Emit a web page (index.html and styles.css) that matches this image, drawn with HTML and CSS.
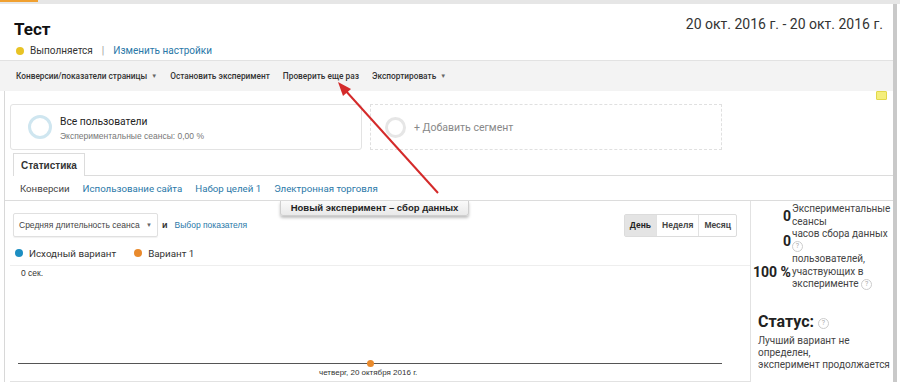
FILE: index.html
```html
<!DOCTYPE html>
<html lang="ru">
<head>
<meta charset="utf-8">
<link rel="stylesheet" href="styles.css">
</head>
<body>
<div class="topbar"><span class="topbar-accent"></span></div>
<div class="frame">
  <div class="main">
    <header class="header">
      <div class="head-left">
        <h1 class="title">Тест</h1>
        <div class="status-row">
          <span class="dot dot-yellow"></span>
          <span class="status-text">Выполняется</span>
          <span class="sep">|</span>
          <a class="link">Изменить настройки</a>
        </div>
      </div>
      <div class="date">20 окт. 2016 г. - 20 окт. 2016 г.</div>
    </header>
    <nav class="toolbar">
      <span class="tb-item">Конверсии/показатели страницы <span class="caret">▼</span></span>
      <span class="tb-item">Остановить эксперимент</span>
      <span class="tb-item">Проверить еще раз</span>
      <span class="tb-item">Экспортировать <span class="caret">▼</span></span>
    </nav>
    <div class="content">
      <span class="note"></span>
      <div class="segments">
        <div class="seg seg-active">
          <span class="ring ring-blue"></span>
          <div class="seg-text">
            <div class="seg-name">Все пользователи</div>
            <div class="seg-sub">Экспериментальные сеансы: 0,00 %</div>
          </div>
        </div>
        <div class="seg seg-add">
          <span class="ring ring-gray"></span>
          <span class="seg-add-text">+ Добавить сегмент</span>
        </div>
      </div>
      <div class="tabs">
        <span class="tab">Статистика</span>
        <span class="tabs-line"></span>
      </div>
      <div class="subtabs">
        <span class="subtab current">Конверсии</span>
        <a class="subtab link">Использование сайта</a>
        <a class="subtab link">Набор целей 1</a>
        <a class="subtab link">Электронная торговля</a>
      </div>
      <div class="body">
        <div class="chart-col">
          <div class="controls">
            <div class="select">Средняя длительность сеанса <span class="caret">▼</span></div>
            <span class="and">и</span>
            <a class="link small-link">Выбор показателя</a>
            <div class="period">
              <span class="pbtn active">День</span>
              <span class="pbtn">Неделя</span>
              <span class="pbtn">Месяц</span>
            </div>
          </div>
          <div class="legend">
            <span class="dot dot-blue"></span><span class="leg-label">Исходный вариант</span>
            <span class="dot dot-orange"></span><span class="leg-label">Вариант 1</span>
          </div>
          <div class="chart">
            <div class="y-label">0 сек.</div>
            <div class="plot">
              <div class="axis"><span class="point"></span></div>
            </div>
            <div class="x-label">четверг, 20 октября 2016 г.</div>
          </div>
        </div>
        <aside class="side">
          <table class="stats">
            <tr><td class="num">0</td><td class="lbl">Экспериментальные сеансы</td></tr>
            <tr><td class="num">0</td><td class="lbl">часов сбора данных <span class="q">?</span></td></tr>
            <tr><td class="num">100 %</td><td class="lbl">пользователей, участвующих в эксперименте <span class="q">?</span></td></tr>
          </table>
          <div class="status-title">Статус: <span class="q">?</span></div>
          <div class="status-desc">Лучший вариант не определен,<br>эксперимент продолжается</div>
        </aside>
      </div>
    </div>
  </div>
  <div class="scrollbar"></div>
</div>
<div class="tooltip">Новый эксперимент – сбор данных</div>
<svg class="arrow" width="900" height="382" viewBox="0 0 900 382">
  <line x1="438" y1="193" x2="345" y2="90" stroke="#d42a2a" stroke-width="2"/>
  <polygon points="338,82 351,89 343,96" fill="#d42a2a"/>
</svg>
</body>
</html>
```

FILE: styles.css
```css
* { box-sizing: border-box; }
html, body { margin: 0; padding: 0; }
body {
  width: 900px;
  height: 382px;
  overflow: hidden;
  background: #fff;
  font-family: Roboto, "Liberation Sans", Arial, sans-serif;
  color: #222;
  position: relative;
}
a { cursor: pointer; }
.topbar {
  height: 4px;
  background: #e6e6e6;
  display: flex;
}
.topbar-accent {
  width: 38px;
  height: 2px;
  background: #f0a030;
}
.frame {
  display: flex;
  height: 378px;
}
.main {
  flex: 1;
  display: flex;
  flex-direction: column;
  min-width: 0;
}
.scrollbar {
  width: 7px;
  background: #fff;
  border-left: 4px solid #c9c9c9;
}
.header {
  display: flex;
  justify-content: space-between;
  height: 56px;
  padding: 0 10px 0 14px;
}
.title {
  margin: 15px 0 0;
  font-size: 17px;
  font-weight: 700;
  line-height: 20px;
  color: #111;
}
.status-row {
  display: flex;
  align-items: center;
  margin-top: 5px;
  font-size: 10px;
  line-height: 14px;
  padding-left: 2px;
}
.dot {
  display: inline-block;
  width: 8px;
  height: 8px;
  border-radius: 50%;
}
.dot-yellow { background: #e8c325; margin-right: 6px; }
.status-text { color: #333; }
.sep { color: #999; margin: 0 9px 0 9px; }
.link { color: #2a78a8; text-decoration: none; }
.date {
  margin-top: 10px;
  font-size: 14px;
  color: #333;
  line-height: 20px;
}
.toolbar {
  height: 31px;
  background: #f3f3f3;
  border-top: 1px solid #e2e2e2;
  display: flex;
  align-items: center;
  padding-left: 16px;
  gap: 13px;
  font-family: Roboto, "Liberation Sans", Arial, sans-serif;
  font-size: 8.3px;
  font-weight: 500;
  color: #333;
}
.tb-item { white-space: nowrap; }
.caret { font-size: 6px; color: #666; margin-left: 2px; vertical-align: 1px; }
.content {
  flex: 1;
  border-left: 1px solid #d8d8d8;
  margin-left: 4px;
  position: relative;
  display: flex;
  flex-direction: column;
}
.note {
  position: absolute;
  right: 6px;
  top: 0;
  width: 11px;
  height: 9px;
  background: #f4ee7c;
  border: 1px solid #e2d84a;
  border-radius: 1px;
}
.segments {
  display: flex;
  gap: 8px;
  padding: 13px 0 0 5px;
  height: 59px;
}
.seg {
  width: 352px;
  height: 46px;
  display: flex;
  align-items: center;
}
.seg-active {
  border: 1px solid #e3e3e3;
  border-radius: 3px;
  padding-left: 17px;
}
.seg-add {
  border: 1px dashed #e0e0e0;
  padding-left: 14px;
}
.ring {
  width: 24px;
  height: 24px;
  border-radius: 50%;
  flex: none;
}
.ring-blue { border: 3px solid #cfe6f0; }
.ring-gray { border: 3px solid #e6e6e6; width: 21px; height: 21px; }
.seg-text { margin-left: 8px; margin-top: 2px; }
.seg-name { font-size: 10.3px; color: #222; line-height: 14px; }
.seg-sub { font-size: 8.5px; color: #777; line-height: 12px; margin-top: 1px; font-family: "Liberation Sans", Arial, sans-serif; }
.seg-add-text { font-size: 10.5px; color: #888; margin-left: 8px; }
.tabs {
  display: flex;
  align-items: flex-end;
  height: 26px;
  padding-left: 8px;
}
.tab {
  height: 23px;
  padding: 0 7px;
  border: 1px solid #dcdcdc;
  border-bottom: none;
  font-family: "Liberation Sans", Arial, sans-serif;
  font-size: 10px;
  font-weight: 700;
  color: #333;
  display: flex;
  align-items: center;
  background: #fff;
}
.tabs-line {
  flex: 1;
  border-bottom: 1px solid #dcdcdc;
}
.subtabs {
  height: 25px;
  display: flex;
  align-items: center;
  gap: 13px;
  padding-left: 15px;
  font-size: 9.7px;
  border-bottom: 1px solid #dcdcdc;
}
.subtab.current { color: #444; }
.body {
  flex: 1;
  display: flex;
}
.chart-col {
  width: 746px;
  border-right: 1px solid #e2e2e2;
  display: flex;
  flex-direction: column;
}
.controls {
  display: flex;
  align-items: center;
  height: 40px;
  padding: 8px 13px 0 8px;
}
.select {
  width: 145px;
  height: 24px;
  border: 1px solid #e0e0e0;
  border-radius: 2px;
  font-family: "Liberation Sans", Arial, sans-serif;
  font-size: 8.5px;
  color: #444;
  display: flex;
  align-items: center;
  justify-content: space-between;
  padding: 0 5px 0 5px;
  box-shadow: 0 1px 1px rgba(0,0,0,0.06);
}
.and { font-family: "Liberation Sans", Arial, sans-serif; font-size: 9px; font-weight: 700; margin: 0 7px 0 4px; color: #333; }
.small-link { font-family: "Liberation Sans", Arial, sans-serif; font-size: 8.5px; }
.period {
  margin-left: auto;
  display: flex;
  border: 1px solid #dcdcdc;
  border-radius: 2px;
  height: 23px;
}
.pbtn {
  font-family: "Liberation Sans", Arial, sans-serif;
  font-size: 8.5px;
  font-weight: 700;
  color: #444;
  display: flex;
  align-items: center;
  padding: 0 5px;
  border-left: 1px solid #e2e2e2;
}
.pbtn:first-child { border-left: none; }
.pbtn.active { background: #e4e4e4; color: #222; }
.legend {
  display: flex;
  align-items: center;
  height: 24px;
  padding-left: 10px;
  font-size: 9.8px;
  color: #333;
}
.dot-blue { background: #1c8ec2; }
.dot-orange { background: #e98a2c; margin-left: 18px; }
.leg-label { margin-left: 6px; }
.chart {
  flex: 1;
  margin-left: 5px;
  border-top: 1px solid #eee;
  border-bottom: 1px solid #e2e2e2;
  display: flex;
  flex-direction: column;
  position: relative;
}
.y-label {
  font-family: "Liberation Sans", Arial, sans-serif;
  font-size: 8.5px;
  color: #333;
  padding: 2px 0 0 11px;
}
.plot {
  flex: 1;
  display: flex;
  align-items: flex-end;
  padding: 0 28px 0 8px;
}
.axis {
  flex: 1;
  height: 1px;
  background: #555;
  position: relative;
}
.point {
  position: absolute;
  left: 349px;
  top: -3px;
  width: 7px;
  height: 7px;
  border-radius: 50%;
  background: #e98a2c;
}
.x-label {
  font-family: "Liberation Sans", Arial, sans-serif;
  font-size: 8px;
  color: #333;
  padding: 4px 0 3px 309px;
  line-height: 10px;
}
.side {
  flex: 1;
  padding: 2px 0 0 2px;
}
.stats {
  border-collapse: collapse;
}
.stats td { padding: 0; vertical-align: middle; }
.num {
  font-size: 14px;
  font-weight: 700;
  color: #222;
  text-align: right;
  white-space: nowrap;
  width: 36px;
}
.lbl {
  font-size: 10px;
  color: #444;
  line-height: 12.5px;
  width: 102px;
  padding-left: 1px !important;
}
.q {
  display: inline-block;
  width: 11px;
  height: 11px;
  border: 1px solid #ccc;
  border-radius: 50%;
  font-size: 7px;
  line-height: 9px;
  text-align: center;
  color: #aaa;
  font-weight: 400;
  vertical-align: middle;
}
.status-title {
  margin-top: 21px;
  padding-left: 5px;
  font-size: 16px;
  font-weight: 700;
  color: #222;
  line-height: 20px;
}
.status-title .q { vertical-align: 2px; }
.status-desc {
  margin-top: 3px;
  padding-left: 5px;
  font-size: 10px;
  line-height: 12px;
  color: #444;
}
.tooltip {
  position: absolute;
  left: 280px;
  top: 201px;
  width: 189px;
  height: 15px;
  background: linear-gradient(#fafafa, #e9e9e9);
  border: 1px solid #cfcfcf;
  border-top: none;
  border-radius: 0 0 3px 3px;
  box-shadow: 0 2px 3px rgba(0,0,0,0.25);
  font-family: "Liberation Sans", Arial, sans-serif;
  font-size: 9.5px;
  font-weight: 700;
  color: #222;
  text-align: center;
  line-height: 13px;
}
.arrow {
  position: absolute;
  left: 0;
  top: 0;
  pointer-events: none;
}
```
